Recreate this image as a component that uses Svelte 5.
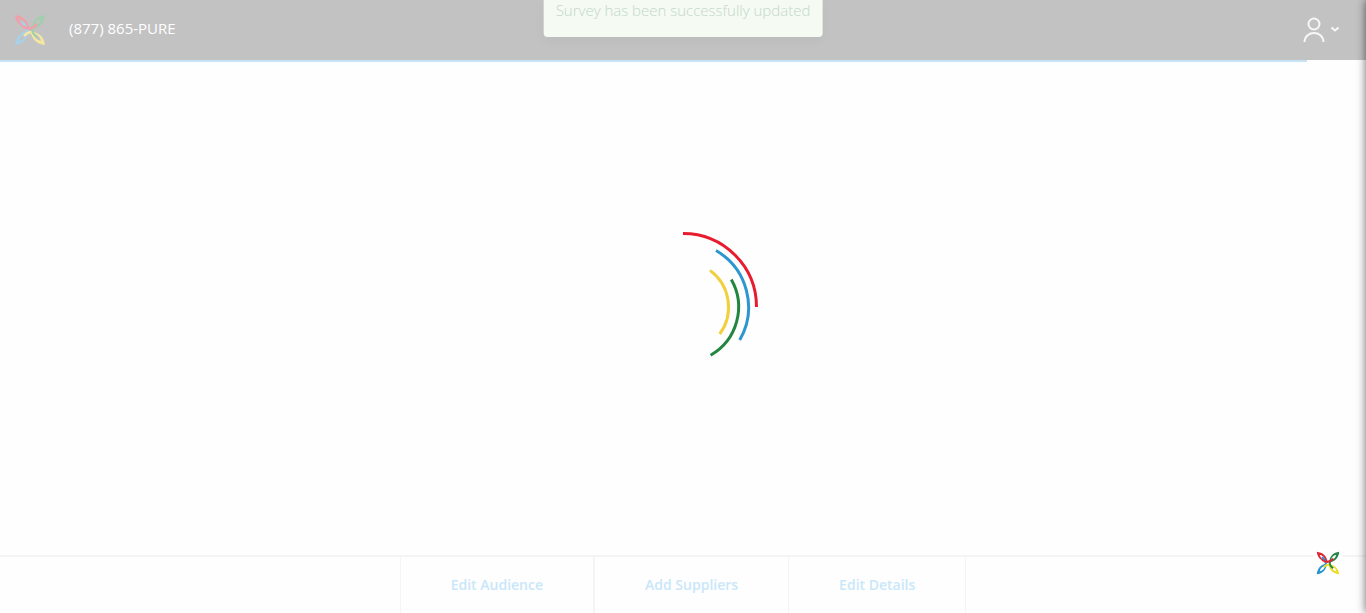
<script>
  const actions = ['Edit Audience', 'Add Suppliers', 'Edit Details'];
  const arcs = [
    { color: '#e81c2e', d: 'M75 1.5A73.5 73.5 0 0 1 148.5 75' },
    { color: '#2b96cf', d: 'M108 18.5A65.5 65.5 0 0 1 131.7 108' },
    { color: '#23863f', d: 'M123.3 47.5A55.5 55.5 0 0 1 102.6 123.2' },
    { color: '#f2cf3c', d: 'M102 38.4A45.5 45.5 0 0 1 111.7 102' }
  ];
  const petal = 'M1 1C9 2 14 6 15.5 14.5C7 14 2 9 1 1ZM5 5C6 9 8 11 12 12C11 8 9 6 5 5Z';
</script>

{#snippet logo(red, green, blue, yellow)}
  <svg viewBox="0 0 32 32" aria-hidden="true" fill="none" fill-rule="evenodd" stroke-width="2.6">
    <path fill={blue} d={petal} transform="rotate(-90 16 16)" />
    <path fill={yellow} d={petal} transform="rotate(180 16 16)" />
    <path fill={green} d={petal} transform="rotate(90 16 16)" />
    <path fill={red} d={petal} />
    <path stroke={blue} d="M13 20C14 16 12 12 8 8" />
    <path stroke={yellow} d="M21 20C18 17 13 18 10 22" />
    <path stroke={green} d="M19 13C17 17 20 21 23 23" />
    <path stroke={red} d="M8 12C14 16 19 15 23 10" />
  </svg>
{/snippet}

<div class="page">
  <header>
    <a class="brand" href="#home" aria-label="Home">
      {@render logo('#f0a0a8', '#a1cfae', '#a7d1e8', '#f5e6a0')}
    </a>
    <a class="phone" href="tel:+18778657873">(877) 865-PURE</a>
    <button class="account" aria-label="Account menu">
      <svg class="person" viewBox="0 0 22 26" aria-hidden="true">
        <circle cx="11" cy="7" r="5.5" />
        <path d="M1.500 25C2 13 20 13 20.500 25" />
      </svg>
      <svg class="chevron" viewBox="0 0 8 6" aria-hidden="true"><path d="M.5 1.500L4 4.500L7.500 1.500" /></svg>
    </button>
  </header>
  <div class="progress"></div>
  <div class="toast" role="status">Survey has been successfully updated</div>

  <main>
    <svg class="spinner" viewBox="0 0 150 150" role="img" aria-label="Loading">
      {#each arcs as arc}
        <path d={arc.d} stroke={arc.color} />
      {/each}
    </svg>
  </main>

  <footer>
    <div class="actions">
      {#each actions as action}
        <button>{action}</button>
      {/each}
    </div>
  </footer>
  <button class="help" aria-label="Help">
    {@render logo('#df2635', '#238445', '#2794d1', '#f1dc2d')}
  </button>
  <div class="drawer"></div>
</div>

<style>
  .page {
    min-height: 100vh;
    display: flex;
    flex-direction: column;
    position: relative;
    overflow: hidden;
    background: #fefefe;
    font-family: "Open Sans", sans-serif;
  }
  button {
    font: inherit;
    border: 0;
    padding: 0;
    background: none;
    cursor: pointer;
  }
  svg { display: block; }
  header {
    height: 60px;
    display: flex;
    align-items: center;
    padding: 0 27px 0 14px;
    background: #c2c2c2;
    box-sizing: border-box;
    position: relative;
  }
  .brand { width: 32px; }
  .phone {
    margin: 0 auto 4px 23px;
    color: #fff;
    font-size: 15px;
    line-height: 24px;
    text-decoration: none;
  }
  .account {
    display: flex;
    align-items: center;
    gap: 6px;
  }
  .account svg {
    fill: none;
    stroke: #f7f7f7;
    stroke-width: 2;
  }
  .person { width: 22px; height: 26px; }
  .chevron { width: 8px; height: 6px; margin-bottom: 2px; }
  .progress {
    width: 95.7%;
    height: 2px;
    background: #c5e3f4;
    box-shadow: 0 0 8px #eff8fd;
  }
  .toast {
    position: absolute;
    top: 0;
    left: 50%;
    transform: translateX(-50%);
    padding: 0 12px 16px;
    border-radius: 0 0 4px 4px;
    background: #f5faf3;
    color: #c2d8ca;
    font-size: 15px;
    font-weight: 300;
    line-height: 21px;
    white-space: nowrap;
    box-shadow: 0 4px 12px rgba(0, 0, 0, 0.03);
  }
  main {
    flex: 1;
    display: flex;
    align-items: center;
    justify-content: center;
    padding-bottom: 4px;
  }
  .spinner {
    width: 150px;
    height: 150px;
    fill: none;
    stroke-width: 3;
  }
  footer {
    height: 56px;
    border-top: 2px solid #f4f4f4;
    display: flex;
    justify-content: center;
  }
  .actions { display: flex; }
  .actions button {
    padding: 0 50px 2px;
    border-right: 1px solid #f4f4f4;
    color: #c9e7fa;
    font-size: 14px;
    font-weight: 600;
  }
  .actions button:first-child {
    border-left: 1px solid #f4f4f4;
    border-right-width: 2px;
  }
  .help {
    position: absolute;
    right: 22px;
    bottom: 34px;
    width: 32px;
    height: 32px;
    padding: 4px;
    border-radius: 50%;
    background: #fff;
  }
  .drawer {
    position: absolute;
    top: 0;
    bottom: 0;
    left: 100%;
    width: 20px;
    box-shadow: 0 0 10px rgba(0, 0, 0, 0.6);
  }
</style>
